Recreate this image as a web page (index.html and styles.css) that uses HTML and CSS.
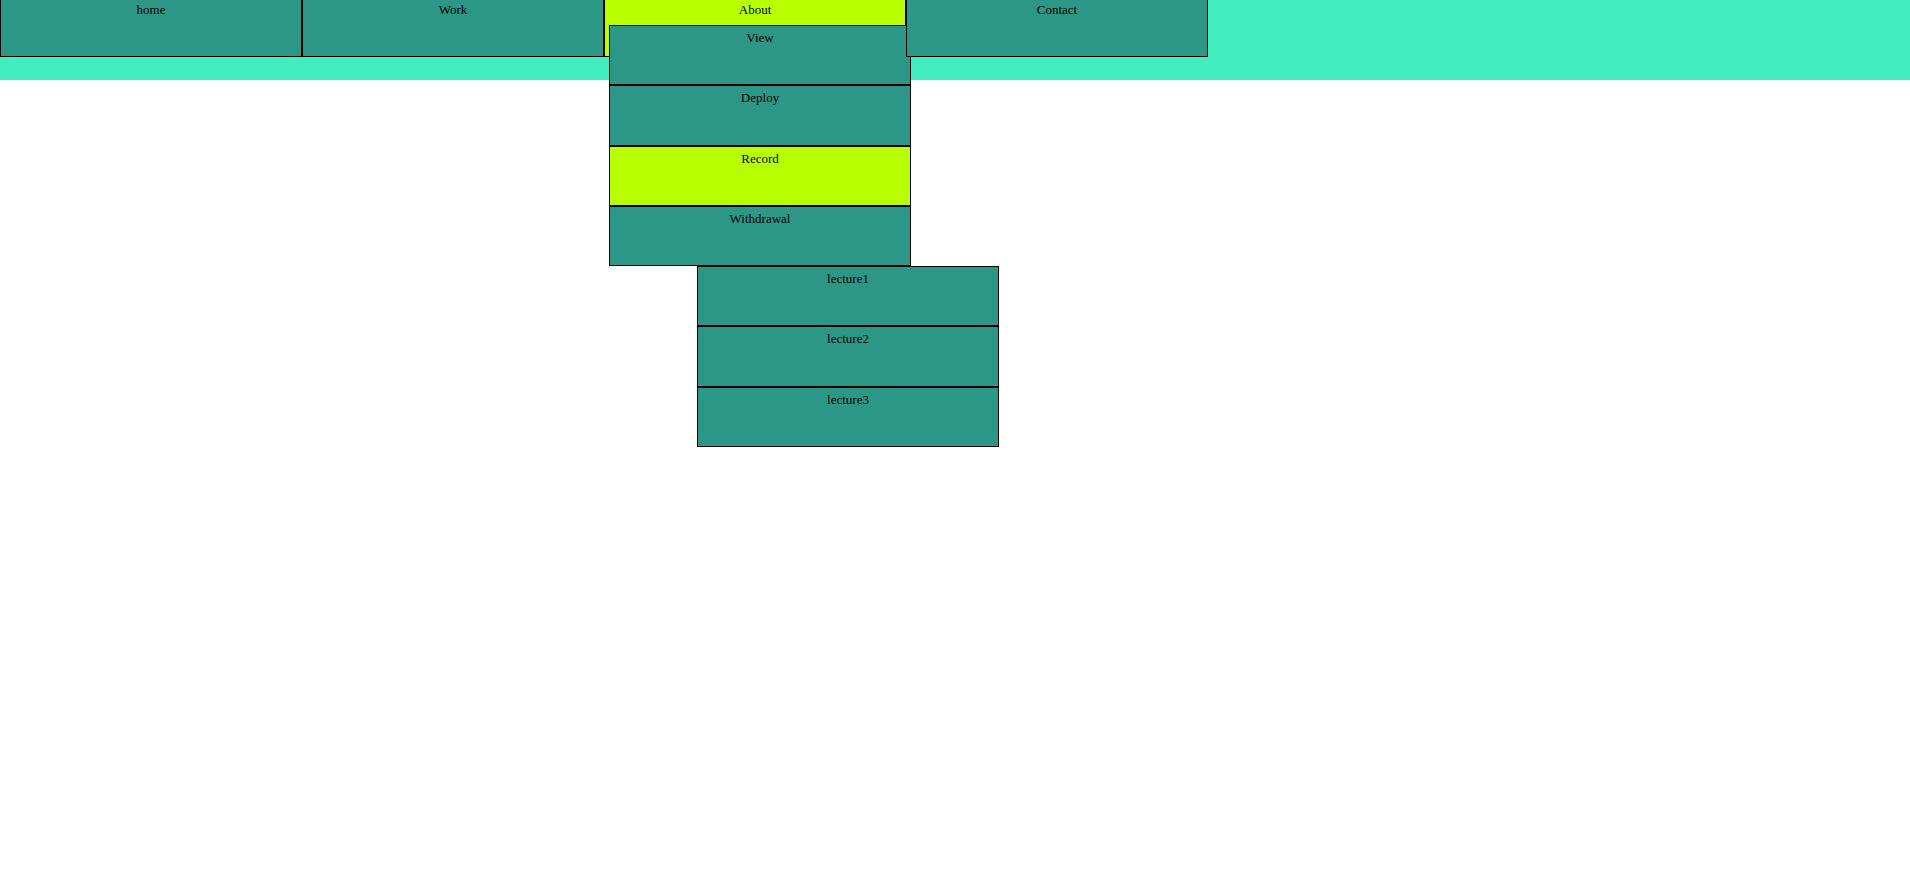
FILE: index.html
```html
<!DOCTYPE html>
<html lang="en">
<head>
<meta charset="utf-8">
<meta name="viewport" content="width=device-width, initial-scale=1">
<title>Menu</title>
<link rel="stylesheet" href="styles.css">
</head>
<body>
<nav class="navbar">
  <ul class="menu">
    <li class="entry"><a class="link" href="#home">home</a></li>
    <li class="entry"><a class="link" href="#work">Work</a></li>
    <li class="entry">
      <a class="link active" href="#about">About</a>
      <ul class="submenu">
        <li class="entry"><a class="link" href="#view">View</a></li>
        <li class="entry"><a class="link" href="#deploy">Deploy</a></li>
        <li class="entry"><a class="link active" href="#record">Record</a></li>
        <li class="entry"><a class="link" href="#withdrawal">Withdrawal</a></li>
      </ul>
      <ul class="submenu lectures">
        <li class="entry"><a class="link" href="#lecture1">lecture1</a></li>
        <li class="entry"><a class="link" href="#lecture2">lecture2</a></li>
        <li class="entry"><a class="link" href="#lecture3">lecture3</a></li>
      </ul>
    </li>
    <li class="entry"><a class="link" href="#contact">Contact</a></li>
  </ul>
</nav>
</body>
</html>
```
FILE: styles.css
```css
* {
  box-sizing: border-box;
}

body {
  min-height: 100vh;
  margin: 0;
  background: #fff;
  font-family: "Liberation Serif", "Times New Roman", serif;
  font-size: 13px;
  line-height: 16px;
}

.navbar {
  display: flex;
  align-items: flex-start;
  min-height: 80px;
  background: #41edbd;
}

.menu,
.submenu {
  margin: 0;
  padding: 0;
  list-style: none;
}

.menu {
  display: flex;
  flex: 1;
  margin-top: -3px;
}

.entry {
  position: relative;
  flex: 0 1 302px;
}

.link {
  display: block;
  height: 100%;
  min-height: 60px;
  padding-top: 4px;
  border: 1px solid #000;
  background: #2c9786;
  color: #000;
  text-align: center;
  text-decoration: none;
}

.link.active {
  background: #b8ff00;
}

.submenu {
  position: absolute;
  top: 28px;
  left: 5px;
  display: grid;
  grid-auto-rows: 1fr;
  width: 100%;
  min-height: 241px;
}

.lectures {
  top: 269px;
  left: 93px;
  min-height: 181px;
}
```
